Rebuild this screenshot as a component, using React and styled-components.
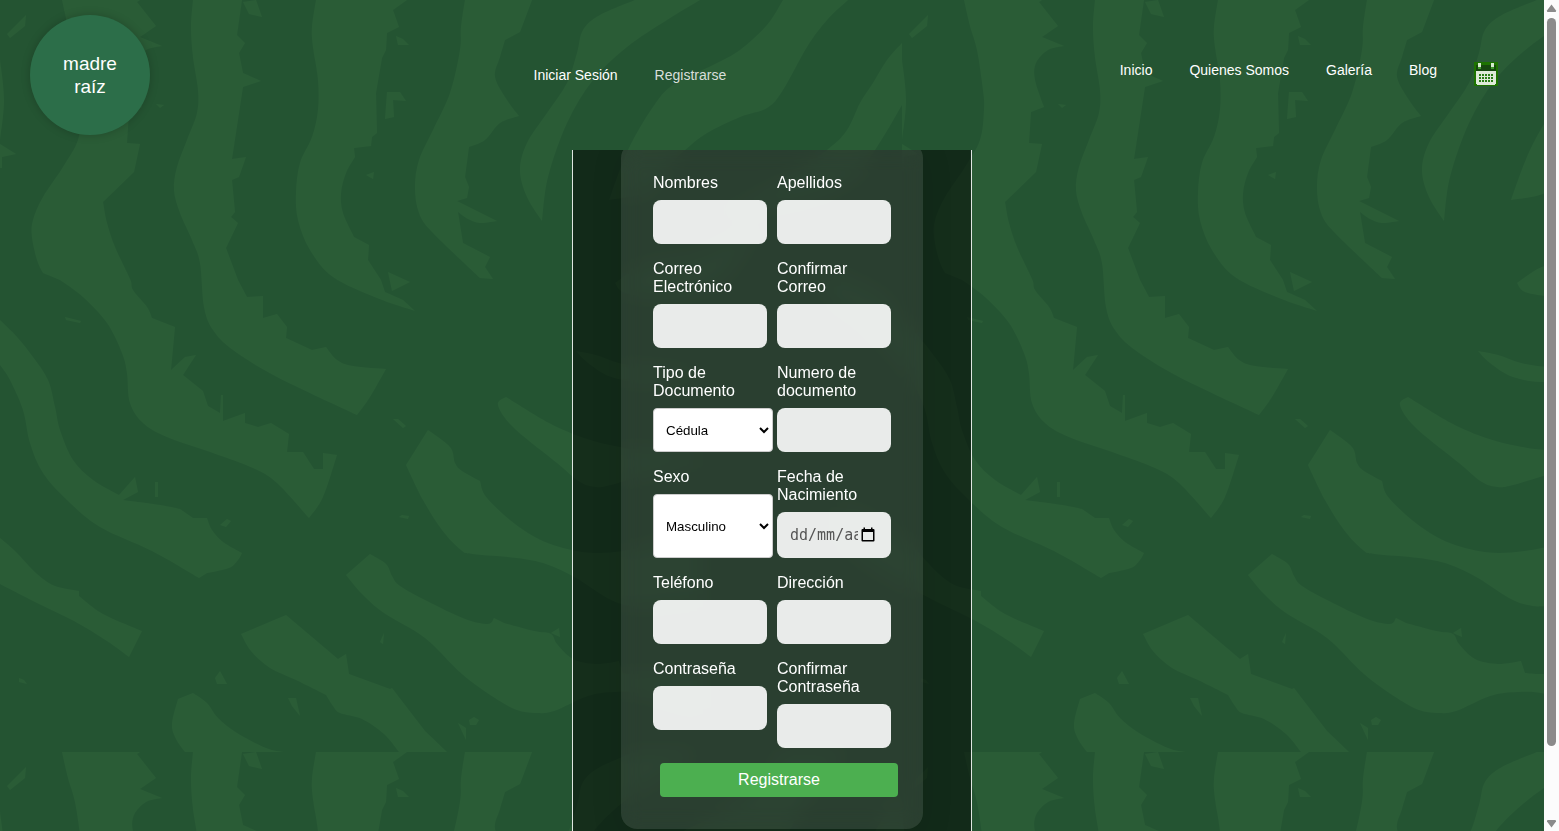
import React from "react";
import styled, { createGlobalStyle } from "styled-components";

/* ---------- Leaf pattern: one 902 x 752 tile, repeated over the page ---------- */

const TILE_W = 902;
const TILE_H = 752;

const points = (text) => text.trim().split(/\s+/).map((p) => p.split(",").map(Number));

// Smooth curve through the points (Catmull-Rom turned into cubic Béziers).
const curve = (pts) =>
  pts
    .slice(1)
    .map((p, i) => {
      const a = pts[Math.max(i - 1, 0)];
      const b = pts[i];
      const d = pts[Math.min(i + 2, pts.length - 1)];
      const c1 = [b[0] + (p[0] - a[0]) / 6, b[1] + (p[1] - a[1]) / 6];
      const c2 = [p[0] - (d[0] - b[0]) / 6, p[1] - (d[1] - b[1]) / 6];
      return `C${[...c1, ...c2, ...p].map((n) => n.toFixed(1)).join(" ")}`;
    })
    .join("");

// A leaf is a list of edges; edges marked "~" are smooth, the others are torn.
const leaf = (...edges) =>
  edges
    .map((edge, i) => {
      const smooth = edge[0] === "~";
      const pts = points(smooth ? edge.slice(1) : edge);
      const start = `${i ? "L" : "M"}${pts[0].join(" ")}`;
      return start + (smooth ? curve(pts) : pts.slice(1).map((p) => `L${p.join(" ")}`).join(""));
    })
    .join("") + "Z";

const leaves = [
  leaf(
    "~62,0 68,26 75,50 81,90 82,110 78,140 63,167 43,197 33,220 32,237 37,260 43,273",
    "~60,280 83,297 107,323 122,353 127,373 130,403 143,423 167,437 213,453 253,468 277,483 309,518",
    "~309,518 323,497 337,455",
    "323,453 323,469 314,469 303,452 287,452 289,434 271,423 258,427 245,423 245,413 223,421 223,395 221,395 220,413 208,406 203,391 183,375 196,355 185,357 171,370 175,327 152,318",
    "~152,318 147,307 133,290 130,279 115,247 107,223 103,202",
    "134,172 140,144 127,143 129,112 142,107",
    "~142,107 133,80 134,63 146,50 162,46",
    "140,37 156,26 137,2 140,0"
  ),
  leaf(
    "~193,0 191,27 193,57 198,90 197,113 187,140 177,167 174,190 180,213 192,240 200,263 204,307 213,330 233,350 277,377 357,415",
    "~357,415 370,397 386,369",
    "~386,369 353,366 337,360 326,347",
    "312,350 286,338 287,327 277,314 263,318 263,296 247,297 238,280 226,248 238,223 231,217 235,212 232,180 239,177 246,157 232,159 243,87 261,81 243,73 239,53 245,43 237,35 242,0"
  ),
  leaf(
    "~316,0 312,27 313,47 318,80 318,110 312,137 300,163 296,193 298,220 310,250 333,277 377,298 415,311",
    "403,300 385,292 381,280 368,260 369,245 354,237",
    "~354,237 343,213 341,193 346,173 355,157",
    "354,148 371,146 372,137 377,133 376,93 382,58 386,50 387,33 399,27 393,10 407,0"
  ),
  leaf(
    "~465,0 461,27 460,50 450,93 433,130 419,160 415,187 419,213 433,233 480,278",
    "493,279 485,267 490,257 463,243 458,212",
    "~458,212 468,219 480,223 497,221",
    "457,201 467,198 469,187 465,177 469,147",
    "~469,147 485,140 500,123 519,116",
    "~519,116 507,100 495,77 500,57 505,40",
    "520,32 532,0"
  ),
  leaf(
    "~635,0 600,15 583,30 577,53 567,83 547,113 527,143 520,170 527,197 542,221",
    "~542,221 548,177 567,123 593,80 627,47 667,20 700,0"
  ),
  leaf(
    "~783,0 767,25 740,50 713,65 673,85 653,107 628,150 609,200",
    "~609,200 645,192 670,165 685,150 707,133 740,117 767,108 783,90 807,47 827,20 848,0"
  ),
  leaf("~902,43 887,60 873,83 860,103 847,130 827,150 770,190 710,215", "~710,215 800,200 850,180 875,150 902,105"),
  leaf("~615,283 645,265 700,255 760,225", "~760,225 720,280 670,296 626,293 615,283"),
  leaf(
    "~0,320 17,337 33,357 48,380 55,407 60,430 73,460 93,480 119,495",
    "135,477 138,492 123,500",
    "~123,500 160,505 180,509",
    "193,518 207,518",
    "~207,518 212,530 223,542 242,553",
    "~242,553 238,560 229,568 207,573",
    "~199,578 152,551 100,527 67,500 43,473 30,443 23,410 10,380 0,365"
  ),
  leaf(
    "~0,538 15,551 37,574 55,586 79,591",
    "~79,596 103,614 142,631",
    "129,657",
    "~129,657 107,641 74,621 37,603 0,584"
  ),
  leaf(
    "~428,430 450,447 455,463 462,471 480,481",
    "~480,481 487,498 519,527 553,545 596,553 645,547 700,530",
    "~700,600 645,606 626,605 607,598 576,578 546,564 517,558 473,554 461,550 442,530 423,500 406,465"
  ),
  leaf(
    "~506,397 549,423 584,438 615,446 645,450 700,450",
    "~700,460 645,475 611,485 596,487 580,482 557,463 513,427 498,405 506,397"
  ),
  leaf("~576,351 588,363 611,377 645,382 690,375", "~690,370 645,367 619,363 596,355 576,351"),
  leaf(
    "286,615 241,634",
    "~241,634 251,651 270,668 296,680 326,695",
    "~326,695 333,706 340,713 362,719 384,734 399,752",
    "447,752 425,731 392,688 390,689 349,674 346,654 338,659"
  ),
  leaf(
    "370,554 346,575",
    "~346,575 362,594 384,613 425,638 462,674 495,698 517,710 536,713 554,711 588,696 615,692 645,694 700,710",
    "~700,670 645,674 623,673",
    "619,661",
    "~619,661 596,664 573,659 557,644 551,634 534,631 504,623",
    "~494,618 488,624 465,619 427,601 400,586 392,576 386,564 370,554"
  ),
  leaf(
    "193,693 178,699",
    "~178,699 172,724 176,739 185,752",
    "283,752",
    "~283,752 266,748 237,733 218,718 207,703 193,693"
  ),
  leaf("~902,320 880,295 850,280 830,270", "~830,300 860,320 880,340 902,365"),
  leaf("~902,538 870,518 840,505", "~840,540 870,565 902,584"),
  leaf("0,60", "~0,60 4,100 0,140", "0,144 16,154 2,157 2,168 0,168"),
];

const scraps = [
  "243,2 249,14 262,17 256,0",
  "26,15 25,26 10,38 7,34",
  "387,92 400,92 406,101 393,100 394,117 385,119",
  "396,36 403,39 409,45 398,45",
  "388,272 410,282 392,291",
  "220,671 215,678 217,684 227,684",
  "288,698 296,698 300,716 292,706",
  "458,723 466,728 466,740",
  "469,720 474,717 479,720 476,725 470,725",
  "559,628 551,633 560,637",
  "384,633 380,642 383,644",
  "19,678 24,680 27,684 19,682",
  "65,317 81,321 80,323 66,320",
  "155,482 158,482 158,497 155,497",
  "220,525 227,519 231,521 226,527",
  "393,419 398,419 406,426 403,428",
  "399,517 402,515 409,516 408,519",
  "156,104 164,105 160,108",
  "366,175 374,172 373,179",
].map((text) => leaf(text));

const tileSvg =
  `<svg xmlns="http://www.w3.org/2000/svg" width="${TILE_W}" height="${TILE_H}">` +
  `<rect width="100%" height="100%" fill="#245432"/>` +
  `<path fill="#2a5c36" d="${leaves.join("")}"/>` +
  `<path fill="#2a5c36" d="${scraps.join("")}"/></svg>`;

const tileUrl = `url("data:image/svg+xml,${encodeURIComponent(tileSvg)}")`;

/* ---------- Styles ---------- */

const GlobalStyle = createGlobalStyle`
  *, *::before, *::after { box-sizing: border-box; }
  body { margin: 0; font-family: "Liberation Sans", Arial, sans-serif; color: #fff; }
`;

const Shell = styled.div`
  display: grid;
  grid-template-columns: minmax(0, 1fr) 15px;
  height: 100vh;
  overflow: hidden;
`;

const Page = styled.div`
  display: flex;
  flex-direction: column;
  align-items: center;
  min-height: 0;
  background-color: #245432;
  background-image: ${tileUrl};
`;

const Header = styled.header`
  display: flex;
  flex: none;
  align-items: center;
  justify-content: space-between;
  width: 100%;
  padding: 15px 46px 15px 30px;
`;

const Logo = styled.a`
  display: flex;
  align-items: center;
  justify-content: center;
  width: 120px;
  height: 120px;
  padding: 0 30px;
  border-radius: 50%;
  background: #2c6e49;
  box-shadow: 0 0 10px rgba(0, 0, 0, 0.2);
  color: #fff;
  font-size: 19px;
  line-height: 23px;
  text-align: center;
  text-decoration: none;
`;

const Nav = styled.nav`
  display: flex;
  align-items: flex-start;
  gap: 37px;
  padding: ${(p) => (p.$account ? "0 10px 0 0" : "0 0 2px")};
`;

const NavLink = styled.a`
  display: block;
  color: ${(p) => (p.$active ? "#d9dfdb" : "#fff")};
  font-size: 14px;
  line-height: 16px;
  text-decoration: none;
`;

const Panel = styled.main`
  display: flex;
  flex: 1;
  flex-direction: column;
  align-items: center;
  width: 400px;
  max-width: 100%;
  min-height: 0;
  overflow: hidden;
  border: solid #dfe6e1;
  border-width: 0 1px;
  background: rgba(0, 0, 0, 0.5);
`;

const Card = styled.form`
  flex: none;
  width: 302px;
  margin-top: -8px;
  padding: 32px;
  border-radius: 16px;
  background: rgba(255, 255, 255, 0.1);
  backdrop-filter: blur(10px);
  box-shadow: 0 8px 32px rgba(0, 0, 0, 0.1);
`;

const Fields = styled.div`
  display: grid;
  grid-template-columns: 1fr 1fr;
  gap: 16px 10px;
`;

const Field = styled.div`
  display: flex;
  flex-direction: column;
  gap: 8px;
  min-width: 0;
`;

const Label = styled.label`
  font-size: 16px;
  line-height: 18px;
`;

const TextInput = styled.input`
  width: 100%;
  height: 44px;
  padding: 0 14px;
  border: 0;
  border-radius: 8px;
  background: rgba(255, 255, 255, 0.9);
  color: #222;
  font: 16px "Liberation Sans", Arial, sans-serif;
`;

const Select = styled.select`
  flex: 1;
  width: 120px;
  min-height: 44px;
  padding: 0 8px;
  border: 1px solid #ccc;
  border-radius: 4px;
  background-color: #fff;
  color: #000;
  font-family: "Liberation Sans", Arial, sans-serif;
`;

const DateBox = styled.div`
  display: flex;
  align-items: center;
  gap: 3px;
  height: 46px;
  padding: 0 16px 0 13px;
  border-radius: 8px;
  background: rgba(255, 255, 255, 0.9);
`;

const DateInput = styled.input`
  flex: 1;
  min-width: 0;
  padding: 0;
  border: 0;
  background: transparent;
  color: #222;
  font: 15px "DejaVu Sans Mono", monospace;

  &::placeholder { color: #555; opacity: 1; }
`;

const DateButton = styled.button`
  display: flex;
  padding: 0;
  border: 0;
  background: none;
`;

const Submit = styled.button`
  width: 100%;
  height: 34px;
  margin: 15px 0 0 7px;
  padding: 0;
  border: 0;
  border-radius: 4px;
  background: #4caf50;
  color: #fff;
  font: 16px "Liberation Sans", Arial, sans-serif;
`;

const ScrollBar = styled.div`
  display: flex;
  flex-direction: column;
  align-items: center;
  background: #fcfcfc;
`;

const ScrollArrow = styled.svg`
  flex: none;
  width: 15px;
  height: 18px;
  fill: #8b8b8b;
`;

const ScrollTrack = styled.div`
  flex: 1;
  width: 9px;
`;

const ScrollThumb = styled.div`
  height: 92%;
  max-height: calc(100% - 67px);
  border-radius: 5px;
  background: #8b8b8b;
`;

/* ---------- Icons ---------- */

const CalendarIcon = () => (
  <svg width="24" height="24" viewBox="0 0 24 24" shapeRendering="crispEdges" display="block">
    <rect width="24" height="24" rx="1" fill="#1d7300" />
    <rect x="2" y="3" width="20" height="7" fill="#16480f" />
    <path d="M4 1h3v4H4zM17 1h3v4h-3z" fill="#d5ead0" />
    <path d="M4 5h3v2H4zM17 5h3v2h-3z" fill="#3f9a2c" />
    <path d="M2 9h20v13h-1v1H3v-1H2z" fill="#dfead9" />
    {[12, 15, 18].map((y) =>
      [5, 8, 11, 14, 17].map((x) => (
        <rect key={`${x}-${y}`} x={x} y={y} width="2" height="2" fill="#2b7d17" />
      ))
    )}
  </svg>
);

const DateIcon = () => (
  <svg width="14" height="16" viewBox="0 0 14 16" display="block">
    <path
      fill="#000"
      fillRule="evenodd"
      d="M2.500 0.500h1.500v1.500h6V0.500h1.500V2h1q1 0 1 1v10.500q0 1-1 1H1.500q-1 0-1-1V3q0-1 1-1h1zM2 5v8h10V5z"
    />
  </svg>
);

/* ---------- Page ---------- */

const fields = [
  { id: "nombres", label: "Nombres" },
  { id: "apellidos", label: "Apellidos" },
  { id: "correo", label: "Correo Electrónico", type: "email" },
  { id: "confirmar-correo", label: "Confirmar Correo", type: "email" },
  { id: "tipo-documento", label: "Tipo de Documento", options: ["Cédula", "Pasaporte"] },
  { id: "documento", label: "Numero de documento" },
  { id: "sexo", label: "Sexo", options: ["Masculino", "Femenino"] },
  { id: "nacimiento", label: "Fecha de Nacimiento", date: true },
  { id: "telefono", label: "Teléfono", type: "tel" },
  { id: "direccion", label: "Dirección" },
  { id: "clave", label: "Contraseña", type: "password" },
  { id: "confirmar-clave", label: "Confirmar Contraseña", type: "password" },
];

function Control({ field }) {
  if (field.options) {
    return (
      <Select id={field.id}>
        {field.options.map((option) => (
          <option key={option}>{option}</option>
        ))}
      </Select>
    );
  }
  if (field.date) {
    return (
      <DateBox>
        <DateInput id={field.id} placeholder="dd/mm/aaaa" />
        <DateButton type="button" aria-label="Abrir calendario">
          <DateIcon />
        </DateButton>
      </DateBox>
    );
  }
  return <TextInput id={field.id} type={field.type || "text"} />;
}

export default function App() {
  return (
    <>
      <GlobalStyle />
      <Shell>
        <Page>
          <Header>
            <Logo href="#">madre raíz</Logo>
            <Nav $account aria-label="Cuenta">
              <NavLink href="#">Iniciar Sesión</NavLink>
              <NavLink href="#" $active>Registrarse</NavLink>
            </Nav>
            <Nav aria-label="Principal">
              <NavLink href="#">Inicio</NavLink>
              <NavLink href="#">Quienes Somos</NavLink>
              <NavLink href="#">Galería</NavLink>
              <NavLink href="#">Blog</NavLink>
              <NavLink href="#" aria-label="Calendario">
                <CalendarIcon />
              </NavLink>
            </Nav>
          </Header>
          <Panel>
            <Card onSubmit={(event) => event.preventDefault()}>
              <Fields>
                {fields.map((field) => (
                  <Field key={field.id}>
                    <Label htmlFor={field.id}>{field.label}</Label>
                    <Control field={field} />
                  </Field>
                ))}
              </Fields>
              <Submit type="submit">Registrarse</Submit>
            </Card>
          </Panel>
        </Page>
        <ScrollBar aria-hidden="true">
          <ScrollArrow viewBox="0 0 15 18">
            <path d="M7.500 4.500 12 10.500Q12.500 12 11 12H4Q2.500 12 3 10.500z" />
          </ScrollArrow>
          <ScrollTrack>
            <ScrollThumb />
          </ScrollTrack>
          <ScrollArrow viewBox="0 0 15 18">
            <path d="M7.500 14.500 12 8.500Q12.500 7 11 7H4Q2.500 7 3 8.500z" />
          </ScrollArrow>
        </ScrollBar>
      </Shell>
    </>
  );
}
